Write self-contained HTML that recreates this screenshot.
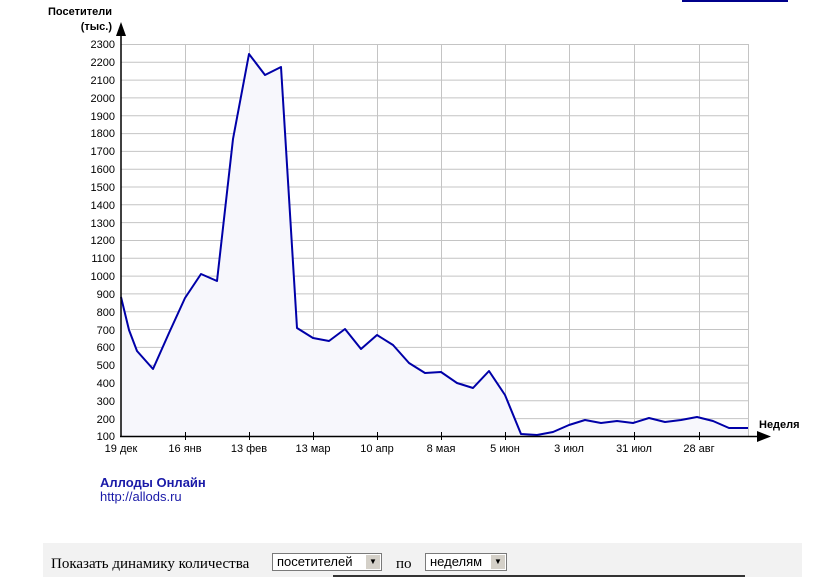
<!DOCTYPE html>
<html><head><meta charset="utf-8"><style>
body{margin:0;width:822px;height:577px;background:#fff;overflow:hidden;position:relative;font-family:"Liberation Sans",Arial,sans-serif}
.t{position:absolute}
</style></head><body>
<div class="t" style="left:682px;top:0;width:106px;height:2px;background:#00008b"></div>
<svg class="t" style="left:0;top:0" width="822" height="470" font-family="Liberation Sans,Arial,sans-serif" font-size="11">
<g stroke="#c4c4c4" stroke-width="1">
<line x1="121" y1="44.5" x2="748" y2="44.5"/>
<line x1="121" y1="62.3" x2="748" y2="62.3"/><line x1="121" y1="80.1" x2="748" y2="80.1"/><line x1="121" y1="97.9" x2="748" y2="97.9"/><line x1="121" y1="115.8" x2="748" y2="115.8"/><line x1="121" y1="133.6" x2="748" y2="133.6"/><line x1="121" y1="151.4" x2="748" y2="151.4"/><line x1="121" y1="169.2" x2="748" y2="169.2"/><line x1="121" y1="187" x2="748" y2="187"/><line x1="121" y1="204.8" x2="748" y2="204.8"/><line x1="121" y1="222.6" x2="748" y2="222.6"/><line x1="121" y1="240.5" x2="748" y2="240.5"/><line x1="121" y1="258.3" x2="748" y2="258.3"/><line x1="121" y1="276.1" x2="748" y2="276.1"/><line x1="121" y1="293.9" x2="748" y2="293.9"/><line x1="121" y1="311.7" x2="748" y2="311.7"/><line x1="121" y1="329.5" x2="748" y2="329.5"/><line x1="121" y1="347.4" x2="748" y2="347.4"/><line x1="121" y1="365.2" x2="748" y2="365.2"/><line x1="121" y1="383" x2="748" y2="383"/><line x1="121" y1="400.8" x2="748" y2="400.8"/><line x1="121" y1="418.6" x2="748" y2="418.6"/>
<line x1="185.5" y1="44" x2="185.5" y2="436"/><line x1="249.5" y1="44" x2="249.5" y2="436"/><line x1="313.5" y1="44" x2="313.5" y2="436"/><line x1="377.5" y1="44" x2="377.5" y2="436"/><line x1="441.5" y1="44" x2="441.5" y2="436"/><line x1="505.5" y1="44" x2="505.5" y2="436"/><line x1="569.5" y1="44" x2="569.5" y2="436"/><line x1="634.5" y1="44" x2="634.5" y2="436"/><line x1="699.5" y1="44" x2="699.5" y2="436"/><line x1="748.5" y1="44" x2="748.5" y2="436"/>
</g>
<polygon fill="#f7f7fc" points="121,436 121,297 137,351 153,369 169,333 185,298 201,274 217,281 233,139 249,54 265,75 281,67 297,328 313,338 329,341 345,329 361,349 377,335 393,345 409,363 425,373 441,372 457,383 473,388 489,371 505,395 521,434 537,435 553,432 569,425 585,420 601,423 617,421 633,423 649,418 665,422 681,420 697,417 713,421 729,428 748,428 748,436"/>
<polyline fill="none" stroke="#0000a8" stroke-width="2" stroke-linejoin="round" points="121,297 129,330 137,351 153,369 169,333 185,298 201,274 217,281 233,139 249,54 265,75 281,67 297,328 313,338 329,341 345,329 361,349 377,335 393,345 409,363 425,373 441,372 457,383 473,388 489,371 505,395 521,434 537,435 553,432 569,425 585,420 601,423 617,421 633,423 649,418 665,422 681,420 697,417 713,421 729,428 748,428"/>
<g stroke="#000" stroke-width="1.5"><line x1="121" y1="30" x2="121" y2="437"/><line x1="120" y1="436.5" x2="760" y2="436.5"/></g>
<polygon points="116,36 121,22 126,36" fill="#000"/>
<polygon points="757,431 771,436.5 757,442" fill="#000"/>
<g stroke="#000"><line x1="185.5" y1="432" x2="185.5" y2="440"/><line x1="249.5" y1="432" x2="249.5" y2="440"/><line x1="313.5" y1="432" x2="313.5" y2="440"/><line x1="377.5" y1="432" x2="377.5" y2="440"/><line x1="441.5" y1="432" x2="441.5" y2="440"/><line x1="505.5" y1="432" x2="505.5" y2="440"/><line x1="569.5" y1="432" x2="569.5" y2="440"/><line x1="634.5" y1="432" x2="634.5" y2="440"/><line x1="699.5" y1="432" x2="699.5" y2="440"/></g>
<g font-weight="bold" font-size="11"><text x="112" y="15" text-anchor="end">Посетители</text><text x="112" y="30" text-anchor="end">(тыс.)</text><text x="759" y="428">Неделя</text></g>
<g text-anchor="end">
<text x="115" y="48">2300</text><text x="115" y="66">2200</text><text x="115" y="84">2100</text><text x="115" y="102">2000</text><text x="115" y="120">1900</text><text x="115" y="137">1800</text><text x="115" y="155">1700</text><text x="115" y="173">1600</text><text x="115" y="191">1500</text><text x="115" y="209">1400</text><text x="115" y="227">1300</text><text x="115" y="244">1200</text><text x="115" y="262">1100</text><text x="115" y="280">1000</text><text x="115" y="298">900</text><text x="115" y="316">800</text><text x="115" y="334">700</text><text x="115" y="351">600</text><text x="115" y="369">500</text><text x="115" y="387">400</text><text x="115" y="405">300</text><text x="115" y="423">200</text><text x="115" y="440">100</text>
</g>
<g text-anchor="middle"><text x="121" y="452">19 дек</text><text x="185" y="452">16 янв</text><text x="249" y="452">13 фев</text><text x="313" y="452">13 мар</text><text x="377" y="452">10 апр</text><text x="441" y="452">8 мая</text><text x="505" y="452">5 июн</text><text x="569" y="452">3 июл</text><text x="634" y="452">31 июл</text><text x="699" y="452">28 авг</text></g>
</svg>
<div class="t" style="left:100px;top:475px;font-size:13px;font-weight:bold;color:#1a1aa8">Аллоды Онлайн</div>
<div class="t" style="left:100px;top:489px;font-size:13px;color:#1a1aa8">http://allods.ru</div>
<div class="t" style="left:43px;top:543px;width:759px;height:34px;background:#f2f2f2"></div>
<div class="t" style="left:51px;top:556px;font-family:'Liberation Serif',serif;font-size:15px">Показать динамику количества</div>
<div class="t" style="left:272px;top:553px;width:110px;height:18px;background:#fff;border:1px solid #7a7a7a;box-sizing:border-box;font-size:13px;line-height:16px;padding-left:4px">посетителей<span style="position:absolute;right:1px;top:1px;width:14px;height:14px;background:#d4d0c8;font-size:8px;line-height:14px;text-align:center">▼</span></div>
<div class="t" style="left:396px;top:556px;font-family:'Liberation Serif',serif;font-size:15px">по</div>
<div class="t" style="left:425px;top:553px;width:82px;height:18px;background:#fff;border:1px solid #7a7a7a;box-sizing:border-box;font-size:13px;line-height:16px;padding-left:4px">неделям<span style="position:absolute;right:1px;top:1px;width:14px;height:14px;background:#d4d0c8;font-size:8px;line-height:14px;text-align:center">▼</span></div>
<div class="t" style="left:333px;top:575px;width:412px;height:2px;background:#333"></div>
</body></html>
